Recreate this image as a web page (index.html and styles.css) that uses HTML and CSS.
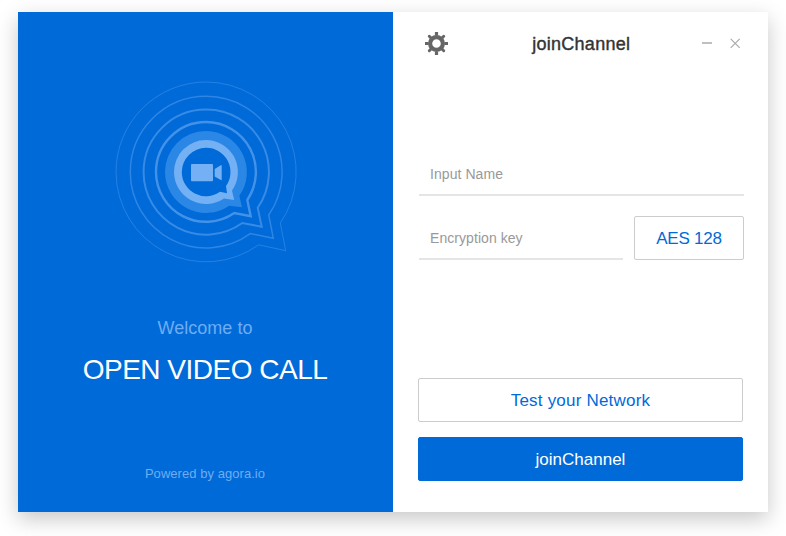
FILE: index.html
```html
<!DOCTYPE html>
<html lang="en">
<head>
<meta charset="utf-8">
<title>joinChannel</title>
<link rel="stylesheet" href="styles.css">
</head>
<body>
<main class="window">
  <section class="intro">
    <svg class="logo" width="200" height="200" viewBox="0 0 200 200" fill="none" stroke="#73b0f4">
      <path d="M175.3 151A90 90 0 0 0 101 10A90 90 0 0 0 11 100A90 90 0 0 0 153.7 172.8L180.7 178.7Z" stroke-opacity=".32"/>
      <path d="M163.7 143A75.7 75.7 0 0 0 101 24.3A75.7 75.7 0 0 0 25.3 100A75.7 75.7 0 0 0 145.3 161.6L168.3 166.3Z" stroke-width="1.5" stroke-opacity=".4"/>
      <path d="M152.7 135.7A62.4 62.4 0 0 0 101 37.6A62.4 62.4 0 0 0 38.6 100A62.4 62.4 0 0 0 137.3 151L156.7 154.7Z" stroke-width="2" stroke-opacity=".47"/>
      <path d="M142.3 128A50 50 0 0 0 101 50A50 50 0 0 0 51 100A50 50 0 0 0 129.3 141L145.7 144.3Z" stroke-width="2.4" stroke-opacity=".58"/>
      <g stroke="none">
        <path d="M134.3 123.7A41 41 0 0 0 101 59A41 41 0 0 0 60 100A41 41 0 0 0 124.2 133.7L137 135.3Z" fill="#2b87e6"/>
        <path d="M127 118.5A32 32 0 0 0 101 68A32 32 0 0 0 69 100A32 32 0 0 0 119 126.4L129.2 127.9Z" fill="#73b0f4"/>
        <path d="M121 114A24.2 24.2 0 0 0 101 75.8A24.2 24.2 0 0 0 76.8 100A24.2 24.2 0 0 0 115 119.8L122 121.2Z" fill="#006ad9"/>
        <rect x="86" y="92" width="22" height="17.3" rx="1" fill="#73b0f4"/>
        <path d="M109.7 97L115.8 93.2Q116.7 92.8 116.7 93.7V107.6Q116.7 108.5 115.8 108L109.7 104.4Z" fill="#73b0f4"/>
      </g>
    </svg>
    <p class="welcome">Welcome to</p>
    <h1 class="product">OPEN VIDEO CALL</h1>
    <p class="powered">Powered by agora.io</p>
  </section>
  <section class="panel">
    <header class="titlebar">
      <svg class="gear" width="24" height="24" viewBox="-11.5 -11.5 24 24" fill="none" stroke="#666">
        <circle r="6.4" stroke-width="4.2"/>
        <path d="M0-11.5V-8M0 8V11.5M-11.5 0H-8M8 0H11.5" stroke-width="3.2"/>
        <path d="M-7.2-7.2L-5.5-5.5M7.2-7.2L5.5-5.5M-7.2 7.2L-5.5 5.5M7.2 7.2L5.5 5.5" stroke-width="3" stroke-linecap="round"/>
      </svg>
      <h2 class="title">joinChannel</h2>
      <svg class="controls" width="40" height="12" viewBox="0 0 40 12" fill="none" stroke="#aaa">
        <path d="M0 5H10" stroke-width="1.5"/>
        <path d="M28.7 .8L37.7 9.8M37.7 .8L28.7 9.8" stroke-width="1.2"/>
      </svg>
    </header>
    <div class="fields">
      <div class="input">Input Name</div>
      <div class="row">
        <div class="input key">Encryption key</div>
        <div class="button cipher">AES 128</div>
      </div>
    </div>
    <div class="actions">
      <div class="button network">Test your Network</div>
      <div class="button join">joinChannel</div>
    </div>
  </section>
</main>
</body>
</html>
```
FILE: styles.css
```css
* { box-sizing: border-box; }
body {
  margin: 0;
  padding: 12px 18px;
  height: 536px;
  overflow: hidden;
  background: #fff;
  font-family: "Liberation Sans", Arial, sans-serif;
}
h1, h2, p { margin: 0; font-weight: 400; white-space: nowrap; }
svg { display: block; }
.window {
  display: flex;
  width: 750px;
  height: 500px;
  box-shadow: 0 7px 20px rgba(0, 0, 0, .22);
}
.intro {
  width: 375px;
  padding: 60px 1px 0 0;
  background: #006ad9;
  color: #6eadf2;
  display: flex;
  flex-direction: column;
  align-items: center;
}
.welcome {
  margin-top: 45px;
  font-size: 18px;
  line-height: 22px;
  letter-spacing: .02px;
}
.product {
  margin-top: 14px;
  color: #fff;
  font-size: 28px;
  line-height: 34px;
  letter-spacing: -.5px;
}
.powered {
  margin-top: 79px;
  font-size: 13px;
  line-height: 16px;
  letter-spacing: .05px;
}
.panel {
  width: 375px;
  padding: 0 25px;
  background: #fff;
}
.titlebar {
  display: grid;
  grid-template-columns: 37px 1fr 40px;
  align-items: center;
  height: 63px;
  padding: 0 1px 0 7px;
}
.title {
  justify-self: center;
  margin: 1px 1.5px 0 0;
  font-size: 18px;
  line-height: 22px;
  letter-spacing: .27px;
  color: #333;
  -webkit-text-stroke: .4px #333;
}
.fields { margin: 77px -1px 0 1px; }
.input {
  height: 44px;
  padding-left: 11px;
  border-bottom: 2px solid #e5e5e5;
  color: #999;
  font-size: 14px;
  line-height: 44px;
  letter-spacing: .06px;
}
.row { display: flex; gap: 11px; margin-top: 20px; }
.key { width: 204px; }
.button {
  height: 44px;
  border: 1px solid #ccc;
  border-radius: 2px;
  color: #006ad9;
  font-size: 17px;
  line-height: 43px;
  text-align: center;
}
.cipher { width: 110px; letter-spacing: -.2px; }
.network { letter-spacing: .2px; }
.actions { display: grid; gap: 15px; margin-top: 118px; }
.join { background: #006ad9; border-color: #006ad9; color: #fff; }
```
